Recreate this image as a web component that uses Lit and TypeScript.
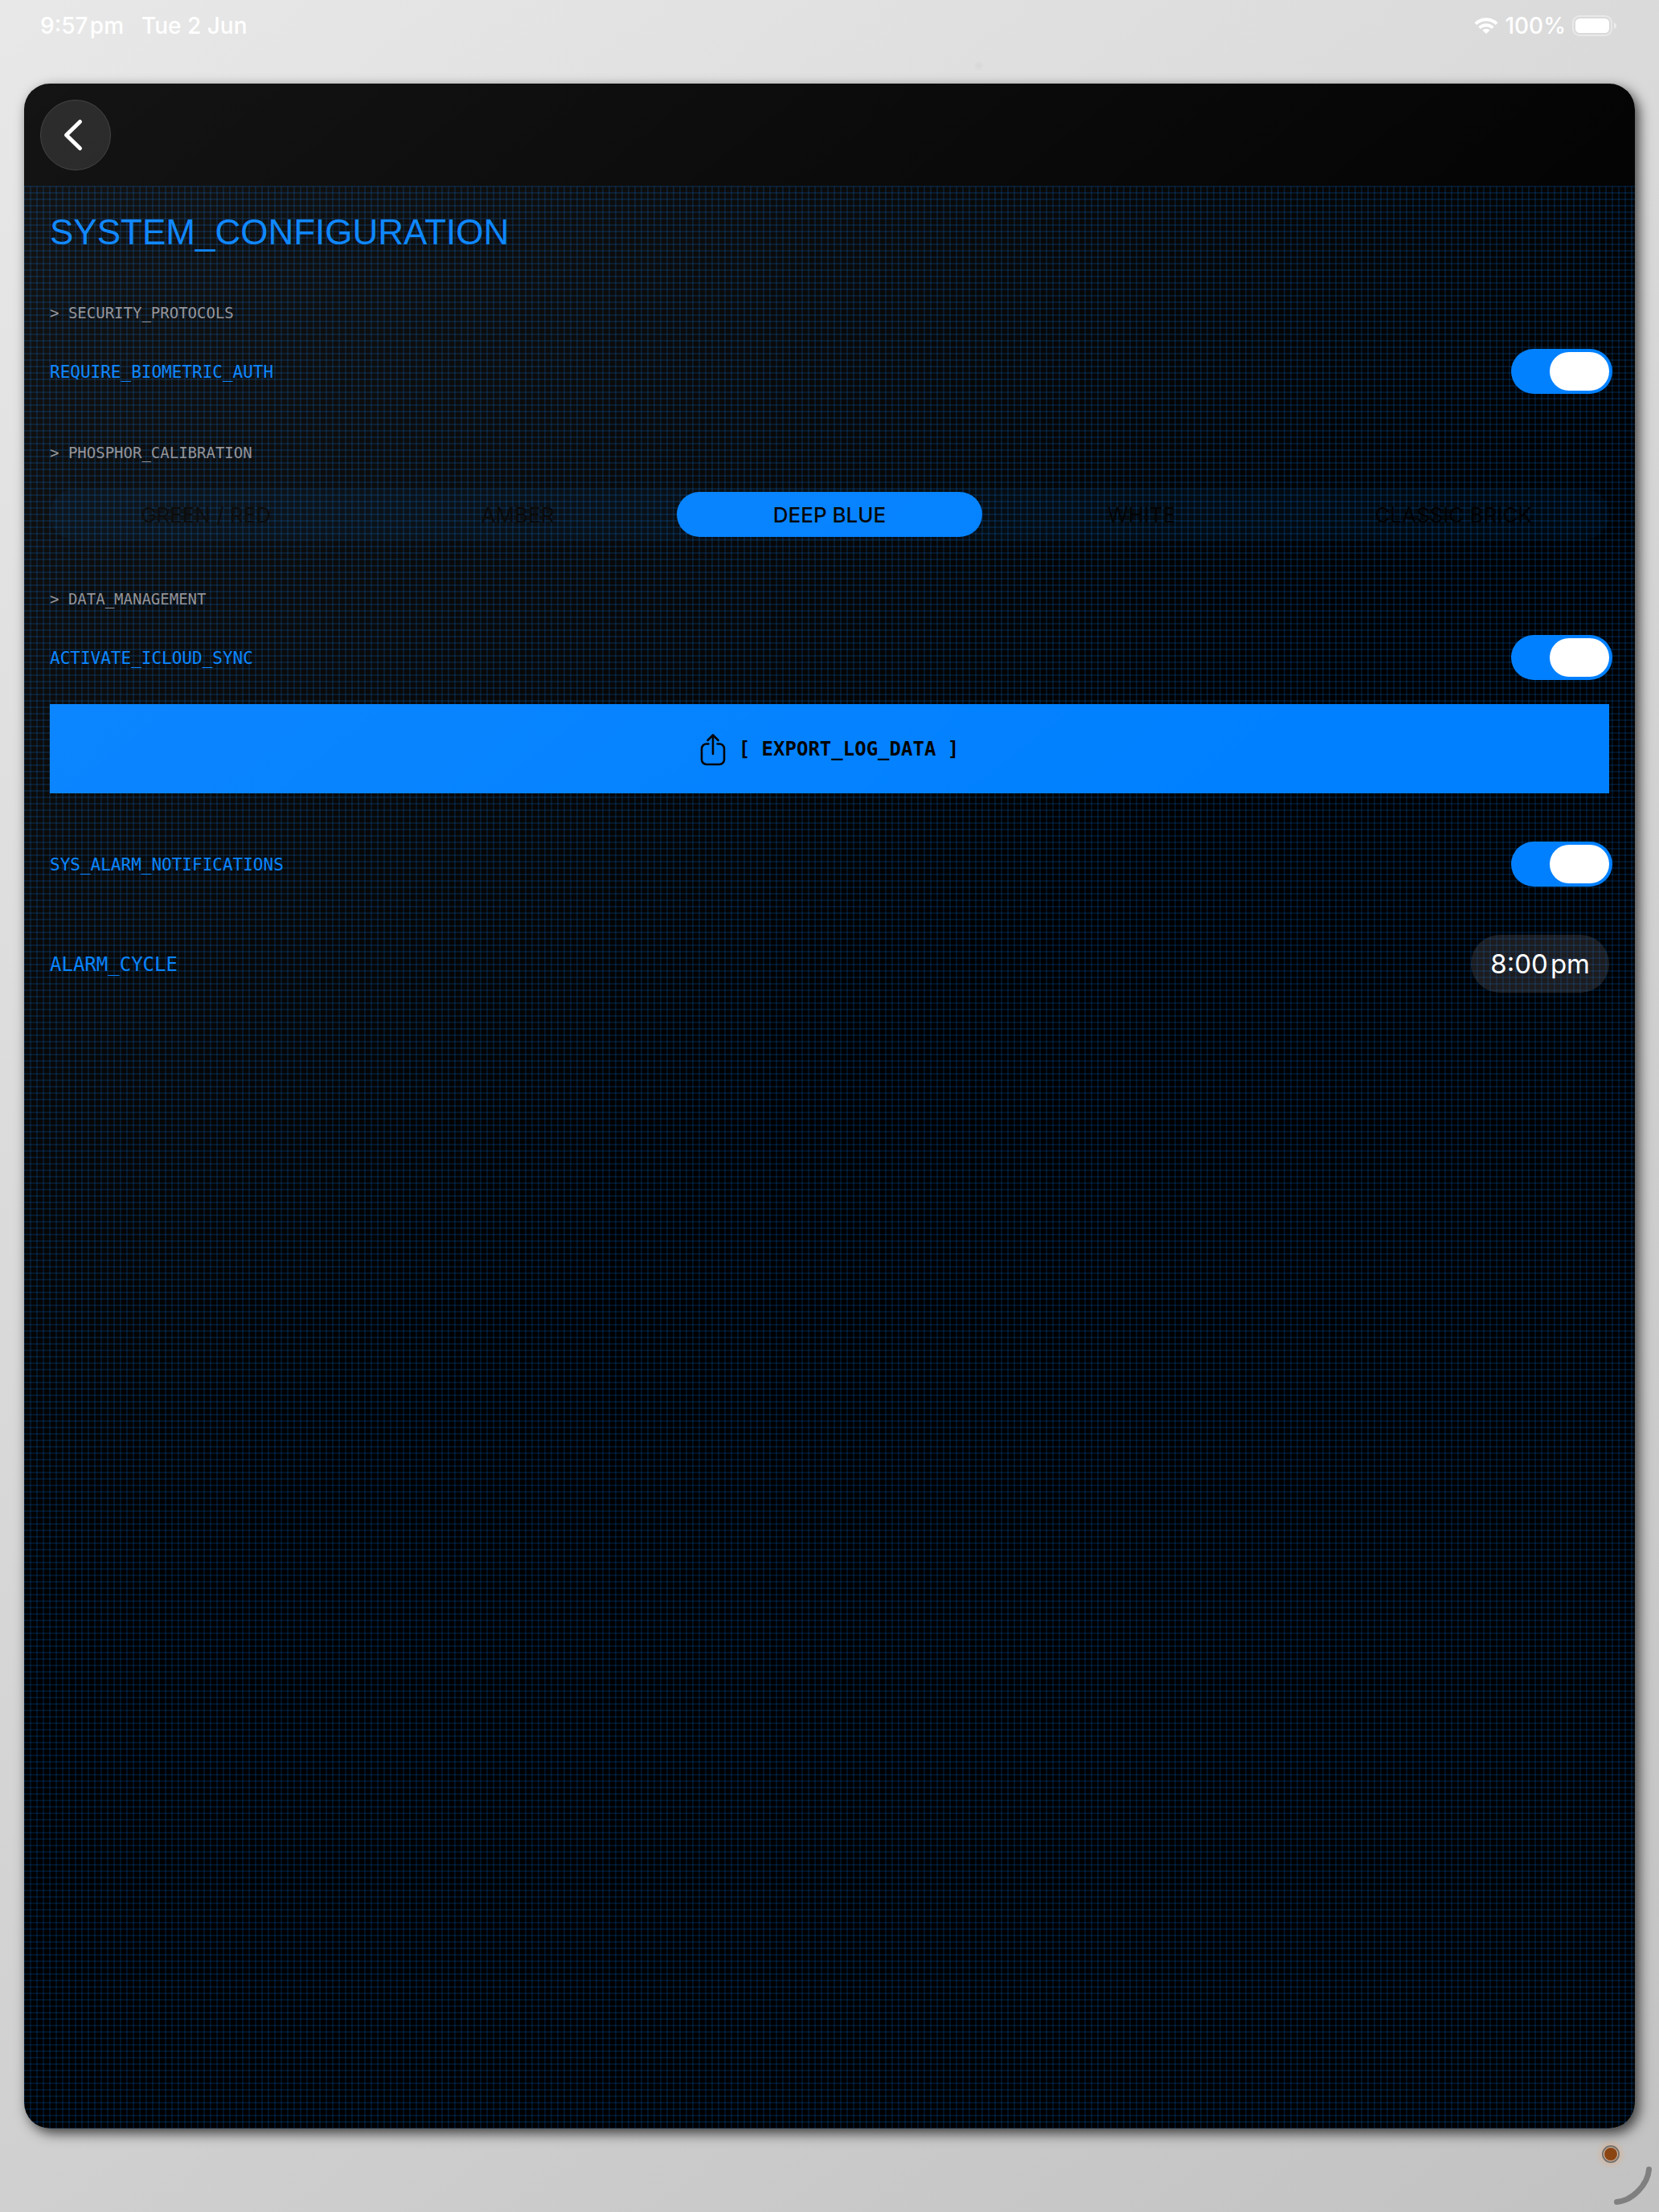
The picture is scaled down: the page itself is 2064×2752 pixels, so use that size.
import { LitElement, html, css } from "lit";
import { customElement, property, state } from "lit/decorators.js";

@customElement("toggle-row")
class ToggleRow extends LitElement {
  @property() label = "";
  @property({ type: Boolean }) on = false;

  static styles = css`
    :host {
      display: block;
    }
    .row {
      display: flex;
      align-items: center;
      justify-content: space-between;
      cursor: pointer;
    }
    .name {
      padding-top: 2px;
      font-family: "DejaVu Sans Mono", "Liberation Mono", monospace;
      font-size: 21px;
      line-height: 28px;
      color: #0080ff;
    }
    .switch {
      appearance: none;
      display: flex;
      align-items: center;
      width: 126px;
      height: 56px;
      margin: 0 -4px 0 0;
      padding: 4px;
      box-sizing: border-box;
      border-radius: 28px;
      background: #39393d;
      cursor: pointer;
    }
    .switch::before {
      content: "";
      width: 74px;
      height: 48px;
      border-radius: 24px;
      background: #fff;
    }
    .switch:checked {
      justify-content: flex-end;
      background: #0080ff;
    }
  `;

  render() {
    return html`<label class="row">
      <span class="name">${this.label}</span>
      <input
        class="switch"
        type="checkbox"
        role="switch"
        .checked=${this.on}
        @change=${(e: Event) => (this.on = (e.target as HTMLInputElement).checked)}
      />
    </label>`;
  }
}

@customElement("app-root")
class AppRoot extends LitElement {
  @state() private phosphor = "DEEP BLUE";
  private phosphors = ["GREEN / RED", "AMBER", "DEEP BLUE", "WHITE", "CLASSIC BRICK"];

  static styles = css`
    :host {
      display: block;
      font-family: Inter, "Liberation Sans", sans-serif;
    }
    button {
      font: inherit;
      border: 0;
      cursor: pointer;
    }
    h1,
    h2 {
      margin: 0;
      font-weight: 400;
    }
    .device {
      display: flex;
      flex-direction: column;
      min-height: 100vh;
      padding: 0 30px;
      box-sizing: border-box;
      background:
        radial-gradient(circle at 59% 82px, rgba(0, 0, 0, 0.04), transparent 7px),
        linear-gradient(143deg, #e8e8e8, #c2c2c2);
    }
    .status {
      display: flex;
      justify-content: space-between;
      align-items: flex-start;
      height: 104px;
      padding: 16px 22px 0 20px;
      box-sizing: border-box;
      color: #fff;
      font-size: 28px;
      font-weight: 500;
      line-height: 32px;
    }
    .group {
      display: flex;
      align-items: center;
    }
    .clock {
      gap: 22px;
    }
    .power {
      gap: 8px;
    }
    .screen {
      position: relative;
      flex: 1;
      display: flex;
      flex-direction: column;
      overflow: hidden;
      border-radius: 32px;
      background: #000;
    }
    .bezel {
      flex: 1;
      display: flex;
      border-radius: 32px;
      box-shadow: 5px 6px 16px rgba(0, 0, 0, 0.7);
    }
    .glare {
      position: absolute;
      inset: 0;
      pointer-events: none;
      background: linear-gradient(142deg, rgba(255, 255, 255, 0.08), rgba(255, 255, 255, 0) 50%);
    }
    .nav {
      padding: 20px 20px 19px;
    }
    .back {
      display: flex;
      align-items: center;
      justify-content: center;
      width: 88px;
      height: 88px;
      padding: 0;
      border-radius: 44px;
      border: 1px solid #363636;
      background: #1b1b1b;
    }
    .content {
      flex: 1;
      display: flex;
      flex-direction: column;
      gap: 61px;
      padding: 31px 32px;
      background:
        repeating-linear-gradient(90deg, rgba(0, 128, 255, 0.15) 0 2px, transparent 2px 8px) -1px 1px / 8px 100% repeat-x,
        repeating-linear-gradient(180deg, rgba(0, 128, 255, 0.15) 0 2px, transparent 2px 8px);
    }
    .title {
      font-family: "Liberation Sans", Arial, sans-serif;
      font-size: 44px;
      line-height: 54px;
      color: #0080ff;
    }
    .section {
      display: flex;
      flex-direction: column;
    }
    .heading {
      margin-bottom: 33px;
      font-family: "DejaVu Sans Mono", "Liberation Mono", monospace;
      font-size: 19px;
      line-height: 24px;
      color: #8e8e93;
    }
    .picker {
      display: grid;
      grid-template-columns: repeat(5, 1fr);
      grid-auto-rows: 64px;
      margin: 0;
      padding: 0;
      border: 0;
      border-radius: 32px;
      background: rgba(0, 128, 255, 0.05);
    }
    .option {
      display: flex;
      align-items: center;
      justify-content: center;
      margin: 4px;
      border-radius: 28px;
      font-size: 26px;
      color: #000;
      cursor: pointer;
    }
    .option:has(.radio:checked) {
      background: #0080ff;
      font-weight: 500;
    }
    .radio {
      appearance: none;
      width: 0;
      height: 0;
      margin: 0;
    }
    .export {
      display: flex;
      align-items: center;
      justify-content: center;
      gap: 16px;
      height: 111px;
      margin: 30px 0 60px;
      padding: 0;
      font-family: "DejaVu Sans Mono", "Liberation Mono", monospace;
      font-size: 24px;
      font-weight: 700;
      color: #000;
      background: #0080ff;
    }
    .alarm {
      display: flex;
      align-items: center;
      justify-content: space-between;
      margin-top: 60px;
    }
    .cycle {
      padding-top: 2px;
      font-family: "DejaVu Sans Mono", "Liberation Mono", monospace;
      font-size: 24px;
      color: #0080ff;
    }
    .time {
      height: 72px;
      padding: 0 24px;
      border-radius: 36px;
      font-size: 33px;
      color: #fff;
      background: rgba(118, 118, 128, 0.24);
    }
    .foot {
      display: flex;
      justify-content: flex-end;
      height: 104px;
      margin-right: -30px;
    }
    .icon {
      display: block;
    }
  `;

  private statusBar() {
    return html`<header class="status">
      <div class="group clock"><span>9:57&#8202;pm</span><span>Tue 2 Jun</span></div>
      <div class="group power">
        <svg class="icon" width="30" height="20" viewBox="0 0 30 20" fill="none" stroke="#fff">
          <path d="M1.800 7.600a19 19 0 0 1 26.400 0" stroke-width="4" />
          <path d="M6.700 12.600a12 12 0 0 1 16.600 0" stroke-width="3.800" />
          <path d="M15 20l-4.800-4.400a7.200 7.200 0 0 1 9.600 0z" fill="#fff" stroke="none" />
        </svg>
        <span>100%</span>
        <svg class="icon" width="56" height="26" viewBox="0 0 56 26">
          <rect x="1" y="1" width="48" height="24" rx="8" fill="none" stroke="#fff" stroke-opacity="0.4" stroke-width="2" />
          <rect x="4" y="4" width="42" height="18" rx="5.500" fill="#fff" />
          <path d="M52 9c4 1.600 4 6.400 0 8z" fill="#fff" fill-opacity="0.500" />
        </svg>
      </div>
    </header>`;
  }

  render() {
    return html`<div class="device">
      ${this.statusBar()}
      <div class="bezel">
        <main class="screen">
          <nav class="nav">
            <button class="back" aria-label="Back">
              <svg class="icon" width="40" height="48" viewBox="0 0 40 48" fill="none" stroke="#fff" stroke-width="5" stroke-linecap="round" stroke-linejoin="round">
                <path d="M25.500 7.500 8.500 24l17 16.500" />
              </svg>
            </button>
          </nav>
          <div class="content">
            <h1 class="title">SYSTEM_CONFIGURATION</h1>
            <section class="section">
              <h2 class="heading">&gt; SECURITY_PROTOCOLS</h2>
              <toggle-row label="REQUIRE_BIOMETRIC_AUTH" on></toggle-row>
            </section>
            <section class="section">
              <h2 class="heading" id="phosphor">&gt; PHOSPHOR_CALIBRATION</h2>
              <fieldset class="picker" aria-labelledby="phosphor">
                ${this.phosphors.map(
                  (p) => html`<label class="option">
                    <input
                      class="radio"
                      type="radio"
                      name="phosphor"
                      .checked=${p === this.phosphor}
                      @change=${() => (this.phosphor = p)}
                    />${p}
                  </label>`
                )}
              </fieldset>
            </section>
            <section class="section">
              <h2 class="heading">&gt; DATA_MANAGEMENT</h2>
              <toggle-row label="ACTIVATE_ICLOUD_SYNC" on></toggle-row>
              <button class="export">
                <svg class="icon" width="32" height="42" viewBox="0 0 32 42" fill="none" stroke="#000" stroke-width="2.600" stroke-linecap="round" stroke-linejoin="round">
                  <path d="M10.500 14.500H8a6 6 0 0 0-6 6V34a6 6 0 0 0 6 6h16a6 6 0 0 0 6-6V20.500a6 6 0 0 0-6-6h-2.500" />
                  <path d="M16 27V3.500M9.500 10 16 3.500 22.500 10" />
                </svg>
                <span>[ EXPORT_LOG_DATA ]</span>
              </button>
              <toggle-row label="SYS_ALARM_NOTIFICATIONS" on></toggle-row>
              <div class="alarm">
                <span class="cycle" id="cycle">ALARM_CYCLE</span>
                <button class="time" aria-describedby="cycle">8:00&#8202;pm</button>
              </div>
            </section>
          </div>
          <div class="glare"></div>
        </main>
      </div>
      <footer class="foot">
        <svg class="icon" width="104" height="104" viewBox="0 0 104 104" fill="none">
          <defs>
            <radialGradient id="glow">
              <stop offset="0.400" stop-color="#ff9040" stop-opacity="0.250" />
              <stop offset="1" stop-color="#ff9040" stop-opacity="0" />
            </radialGradient>
          </defs>
          <circle cx="44" cy="32" r="19" fill="url(#glow)" />
          <circle cx="44" cy="32" r="10" fill="#d8c4b4" stroke="#77706a" stroke-width="2" />
          <circle cx="44" cy="32" r="8" fill="#8b4513" />
          <path d="M91.500 51C90 70 71 90 51.500 91.500" stroke="#808080" stroke-width="7" stroke-linecap="round" />
        </svg>
      </footer>
    </div>`;
  }
}
